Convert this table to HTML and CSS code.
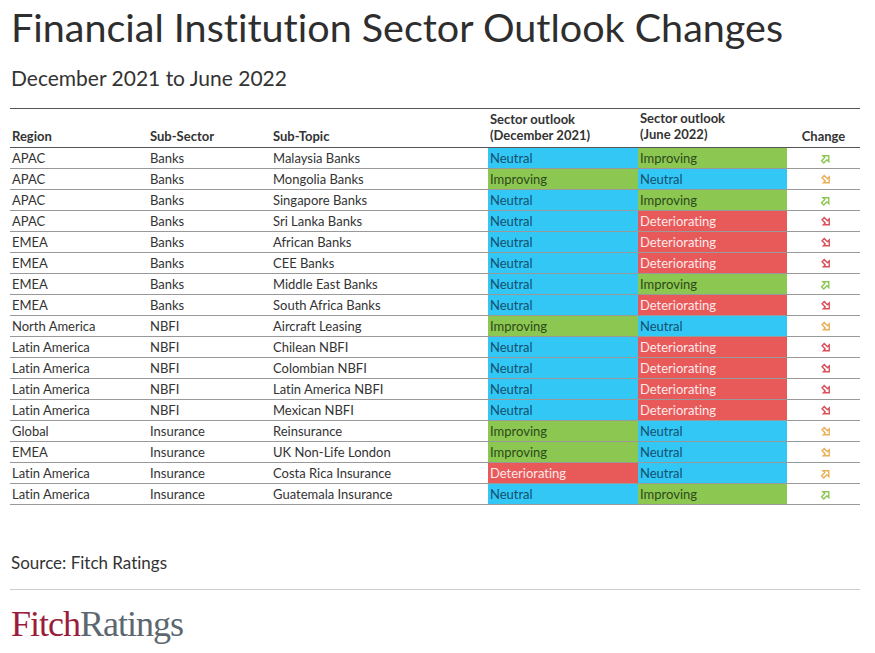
FILE: index.html
```html
<!DOCTYPE html>
<html>
<head>
<meta charset="utf-8">
<link rel="stylesheet" href="styles.css">
</head>
<body>
<svg width="0" height="0" class="defs">
  <defs>
    <path id="arr" d="M1.5 3.8 H5.6 V1.4 L9.4 5.2 L5.6 9 V6.6 H1.5 Z"/>
  </defs>
</svg>
<div class="page">
  <h1 class="title">Financial Institution Sector Outlook Changes</h1>
  <div class="subtitle">December 2021 to June 2022</div>
  <table class="tbl">
    <colgroup>
      <col class="c-region"><col class="c-sector"><col class="c-topic"><col class="c-dec"><col class="c-jun"><col class="c-chg">
    </colgroup>
    <thead>
      <tr>
        <th>Region</th><th>Sub-Sector</th><th>Sub-Topic</th>
        <th class="two">Sector outlook<br>(December 2021)</th>
        <th class="two jun">Sector outlook<br>(June 2022)</th>
        <th class="chg">Change</th>
      </tr>
    </thead>
    <tbody id="rows"></tbody>
  </table>
  <div class="source">Source: Fitch Ratings</div>
  <div class="logo"><span class="fitch">Fitch</span><span class="ratings">Ratings</span></div>
</div>
<script src="app.js"></script>
</body>
</html>
```

FILE: app.js
```js
const data = [
  ["APAC","Banks","Malaysia Banks","N","I"],
  ["APAC","Banks","Mongolia Banks","I","N"],
  ["APAC","Banks","Singapore Banks","N","I"],
  ["APAC","Banks","Sri Lanka Banks","N","D"],
  ["EMEA","Banks","African Banks","N","D"],
  ["EMEA","Banks","CEE Banks","N","D"],
  ["EMEA","Banks","Middle East Banks","N","I"],
  ["EMEA","Banks","South Africa Banks","N","D"],
  ["North America","NBFI","Aircraft Leasing","I","N"],
  ["Latin America","NBFI","Chilean NBFI","N","D"],
  ["Latin America","NBFI","Colombian NBFI","N","D"],
  ["Latin America","NBFI","Latin America NBFI","N","D"],
  ["Latin America","NBFI","Mexican NBFI","N","D"],
  ["Global","Insurance","Reinsurance","I","N"],
  ["EMEA","Insurance","UK Non-Life London","I","N"],
  ["Latin America","Insurance","Costa Rica Insurance","D","N"],
  ["Latin America","Insurance","Guatemala Insurance","N","I"]
];
const label = {N:"Neutral", I:"Improving", D:"Deteriorating"};
const cls = {N:"neu", I:"imp", D:"det"};
const rank = {D:0, N:1, I:2};
const tb = document.getElementById("rows");
data.forEach(r => {
  const tr = document.createElement("tr");
  const up = rank[r[4]] > rank[r[3]];
  let color;
  if (up) color = r[4] === "I" ? "g" : "o";
  else color = r[4] === "D" ? "r" : "o";
  tr.innerHTML =
    `<td>${r[0]}</td><td>${r[1]}</td><td>${r[2]}</td>` +
    `<td class="o ${cls[r[3]]}">${label[r[3]]}</td>` +
    `<td class="o ${cls[r[4]]}">${label[r[4]]}</td>` +
    `<td class="chg"><svg class="arrow ${color} ${up ? "up" : "down"}" viewBox="0 0 11 11"><use href="#arr"/></svg></td>`;
  tb.appendChild(tr);
});
```

FILE: styles.css
```css
html, body {
  margin: 0;
  padding: 0;
  background: #fff;
}
.defs {
  position: absolute;
  width: 0;
  height: 0;
}
.page {
  padding: 3px 15px 0 10px;
  width: 850px;
  font-family: Lato, "Open Sans", sans-serif;
  font-variant-ligatures: none;
  color: #333;
}
.title {
  margin: 0;
  font-weight: 400;
  font-size: 39.5px;
  line-height: 48px;
  color: #2e2e2e;
  padding-left: 1px;
}
.subtitle {
  margin-top: 15px;
  font-size: 21px;
  line-height: 24px;
  color: #333;
  padding-left: 1px;
  padding-bottom: 18px;
  border-bottom: 1px solid #555;
}
.tbl {
  width: 850px;
  border-collapse: collapse;
  table-layout: fixed;
  font-size: 13px;
}
.c-region { width: 138px; }
.c-sector { width: 123px; }
.c-topic { width: 217px; }
.c-dec { width: 150px; }
.c-jun { width: 149px; }
.c-chg { width: 73px; }
.tbl th {
  text-align: left;
  font-weight: 700;
  font-size: 13px;
  line-height: 16px;
  vertical-align: bottom;
  padding: 0 0 3px 2px;
  height: 33px;
  color: #333;
  border-bottom: 1px solid #555;
}
.tbl th.two {
  padding-bottom: 4px;
}
.tbl th.jun {
  padding-bottom: 5px;
}
.tbl th.chg {
  text-align: center;
  padding-left: 0;
}
.tbl td {
  height: 20px;
  padding: 0 0 0 2px;
  line-height: 20px;
  border-bottom: 1px solid #999;
  white-space: nowrap;
  color: #333;
}
.tbl td.neu {
  background: #33c7f5;
  color: #145170;
}
.tbl td.imp {
  background: #8cc751;
  color: #2c4a1a;
}
.tbl td.det {
  background: #e85a5a;
  color: #fde8e8;
}
.tbl td.chg {
  text-align: center;
  padding: 0 0 0 5px;
}
.arrow {
  width: 12px;
  height: 12px;
  vertical-align: -2px;
  fill: none;
  stroke-width: 1.3;
  stroke-linejoin: miter;
}
.arrow.up { transform: rotate(-45deg); }
.arrow.down { transform: rotate(45deg); }
.arrow.g { stroke: #8cc751; }
.arrow.o { stroke: #eab058; }
.arrow.r { stroke: #d9505a; }
.source {
  margin-top: 48px;
  font-size: 17px;
  line-height: 20px;
  padding: 0 0 16px 1px;
  border-bottom: 1px solid #ccc;
  color: #333;
}
.logo {
  margin-top: 14px;
  font-family: "Liberation Serif", "Times New Roman", serif;
  font-size: 36px;
  line-height: 40px;
  letter-spacing: -1px;
  padding-left: 1px;
}
.fitch { color: #9b1d3c; }
.ratings { color: #5c6770; }
```
